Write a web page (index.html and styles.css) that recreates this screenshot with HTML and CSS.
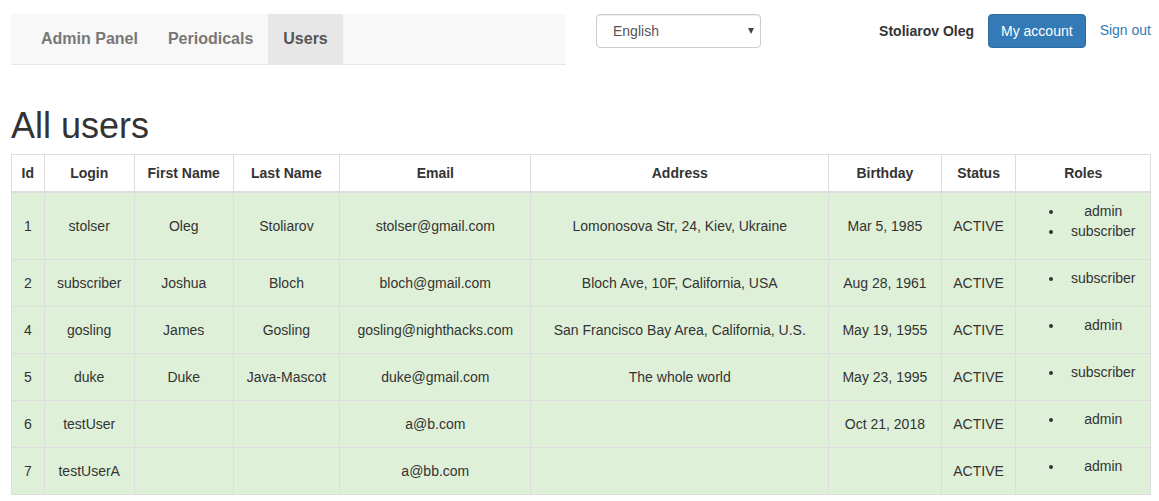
FILE: index.html
```html
<!DOCTYPE html>
<html lang="en">
<head>
<meta charset="utf-8">
<title>All users</title>
<link rel="stylesheet" href="styles.css">
</head>
<body>
<div class="page">
  <header class="topbar">
    <nav class="navbar">
      <ul class="nav">
        <li><a href="#">Admin Panel</a></li>
        <li><a href="#">Periodicals</a></li>
        <li class="active"><a href="#">Users</a></li>
      </ul>
    </nav>
    <div class="lang-wrap">
      <select class="lang">
        <option>English</option>
        <option>Українська</option>
      </select>
      <span class="caret"></span>
    </div>
    <div class="account">
      <span class="user-name">Stoliarov Oleg</span>
      <a class="btn" href="#">My account</a>
      <a class="signout" href="#">Sign out</a>
    </div>
  </header>

  <h1 class="title">All users</h1>

  <table class="users">
    <thead>
      <tr>
        <th>Id</th><th>Login</th><th>First Name</th><th>Last Name</th><th>Email</th><th>Address</th><th>Birthday</th><th>Status</th><th>Roles</th>
      </tr>
    </thead>
    <tbody>
      <tr>
        <td>1</td><td>stolser</td><td>Oleg</td><td>Stoliarov</td><td>stolser@gmail.com</td><td>Lomonosova Str, 24, Kiev, Ukraine</td><td>Mar 5, 1985</td><td>ACTIVE</td>
        <td><ul class="roles"><li>admin</li><li>subscriber</li></ul></td>
      </tr>
      <tr>
        <td>2</td><td>subscriber</td><td>Joshua</td><td>Bloch</td><td>bloch@gmail.com</td><td>Bloch Ave, 10F, California, USA</td><td>Aug 28, 1961</td><td>ACTIVE</td>
        <td><ul class="roles"><li>subscriber</li></ul></td>
      </tr>
      <tr>
        <td>4</td><td>gosling</td><td>James</td><td>Gosling</td><td>gosling@nighthacks.com</td><td>San Francisco Bay Area, California, U.S.</td><td>May 19, 1955</td><td>ACTIVE</td>
        <td><ul class="roles"><li>admin</li></ul></td>
      </tr>
      <tr>
        <td>5</td><td>duke</td><td>Duke</td><td>Java-Mascot</td><td>duke@gmail.com</td><td>The whole world</td><td>May 23, 1995</td><td>ACTIVE</td>
        <td><ul class="roles"><li>subscriber</li></ul></td>
      </tr>
      <tr>
        <td>6</td><td>testUser</td><td></td><td></td><td>a@b.com</td><td></td><td>Oct 21, 2018</td><td>ACTIVE</td>
        <td><ul class="roles"><li>admin</li></ul></td>
      </tr>
      <tr>
        <td>7</td><td>testUserA</td><td></td><td></td><td>a@bb.com</td><td></td><td></td><td>ACTIVE</td>
        <td><ul class="roles"><li>admin</li></ul></td>
      </tr>
    </tbody>
  </table>
</div>
</body>
</html>
```
FILE: styles.css
```css
html, body {
  margin: 0;
  padding: 0;
  background: #fff;
}

body {
  font-family: "Liberation Sans", Arial, sans-serif;
  font-size: 14px;
  line-height: 20px;
  color: #333;
}

.page {
  padding: 14px 8px 0 11px;
}

.topbar {
  display: flex;
  align-items: flex-start;
}

.navbar {
  width: 555px;
  height: 50px;
  background: #f8f8f8;
  border-bottom: 1px solid #e7e7e7;
  flex: none;
}

.nav {
  list-style: none;
  margin: 0;
  padding: 0 0 0 15px;
  display: flex;
}

.nav a {
  display: block;
  padding: 15px 15px;
  line-height: 20px;
  font-size: 16px;
  font-weight: bold;
  color: #777;
  text-decoration: none;
}

.nav .active a {
  background: #e7e7e7;
  color: #555;
}

.lang-wrap {
  position: relative;
  margin-left: 30px;
  width: 165px;
  height: 34px;
}

.lang {
  -webkit-appearance: none;
  appearance: none;
  width: 165px;
  height: 34px;
  padding: 6px 16px;
  font-family: inherit;
  font-size: 14px;
  color: #555;
  background: #fff;
  border: 1px solid #ccc;
  border-radius: 4px;
  box-shadow: inset 0 1px 1px rgba(0, 0, 0, 0.075);
}

.caret {
  position: absolute;
  right: 7px;
  top: 14px;
  width: 0;
  height: 0;
  border-left: 3px solid transparent;
  border-right: 3px solid transparent;
  border-top: 6px solid #444;
  pointer-events: none;
}

.account {
  margin-left: auto;
  display: flex;
  align-items: center;
  height: 34px;
}

.user-name {
  font-weight: bold;
  margin-right: 14px;
}

.btn {
  display: inline-block;
  padding: 6px 12px;
  line-height: 20px;
  color: #fff;
  background: #337ab7;
  border: 1px solid #2e6da4;
  border-radius: 4px;
  text-decoration: none;
  margin-right: 14px;
}

.signout {
  color: #337ab7;
  text-decoration: none;
  margin-top: -2px;
}

.title {
  font-size: 36px;
  font-weight: 500;
  line-height: 40px;
  margin: 41px 0 8px;
}

.users {
  width: 100%;
  border-collapse: collapse;
  border: 1px solid #ddd;
}

.users th,
.users td {
  border: 1px solid #ddd;
  padding: 8px;
  text-align: center;
  vertical-align: middle;
  line-height: 20px;
}

.users th {
  font-weight: bold;
  border-bottom-width: 2px;
  background: #fff;
}

.users tbody td {
  background: #dff0d8;
}

.roles {
  margin: 0 0 10px;
  padding-left: 40px;
}
```
